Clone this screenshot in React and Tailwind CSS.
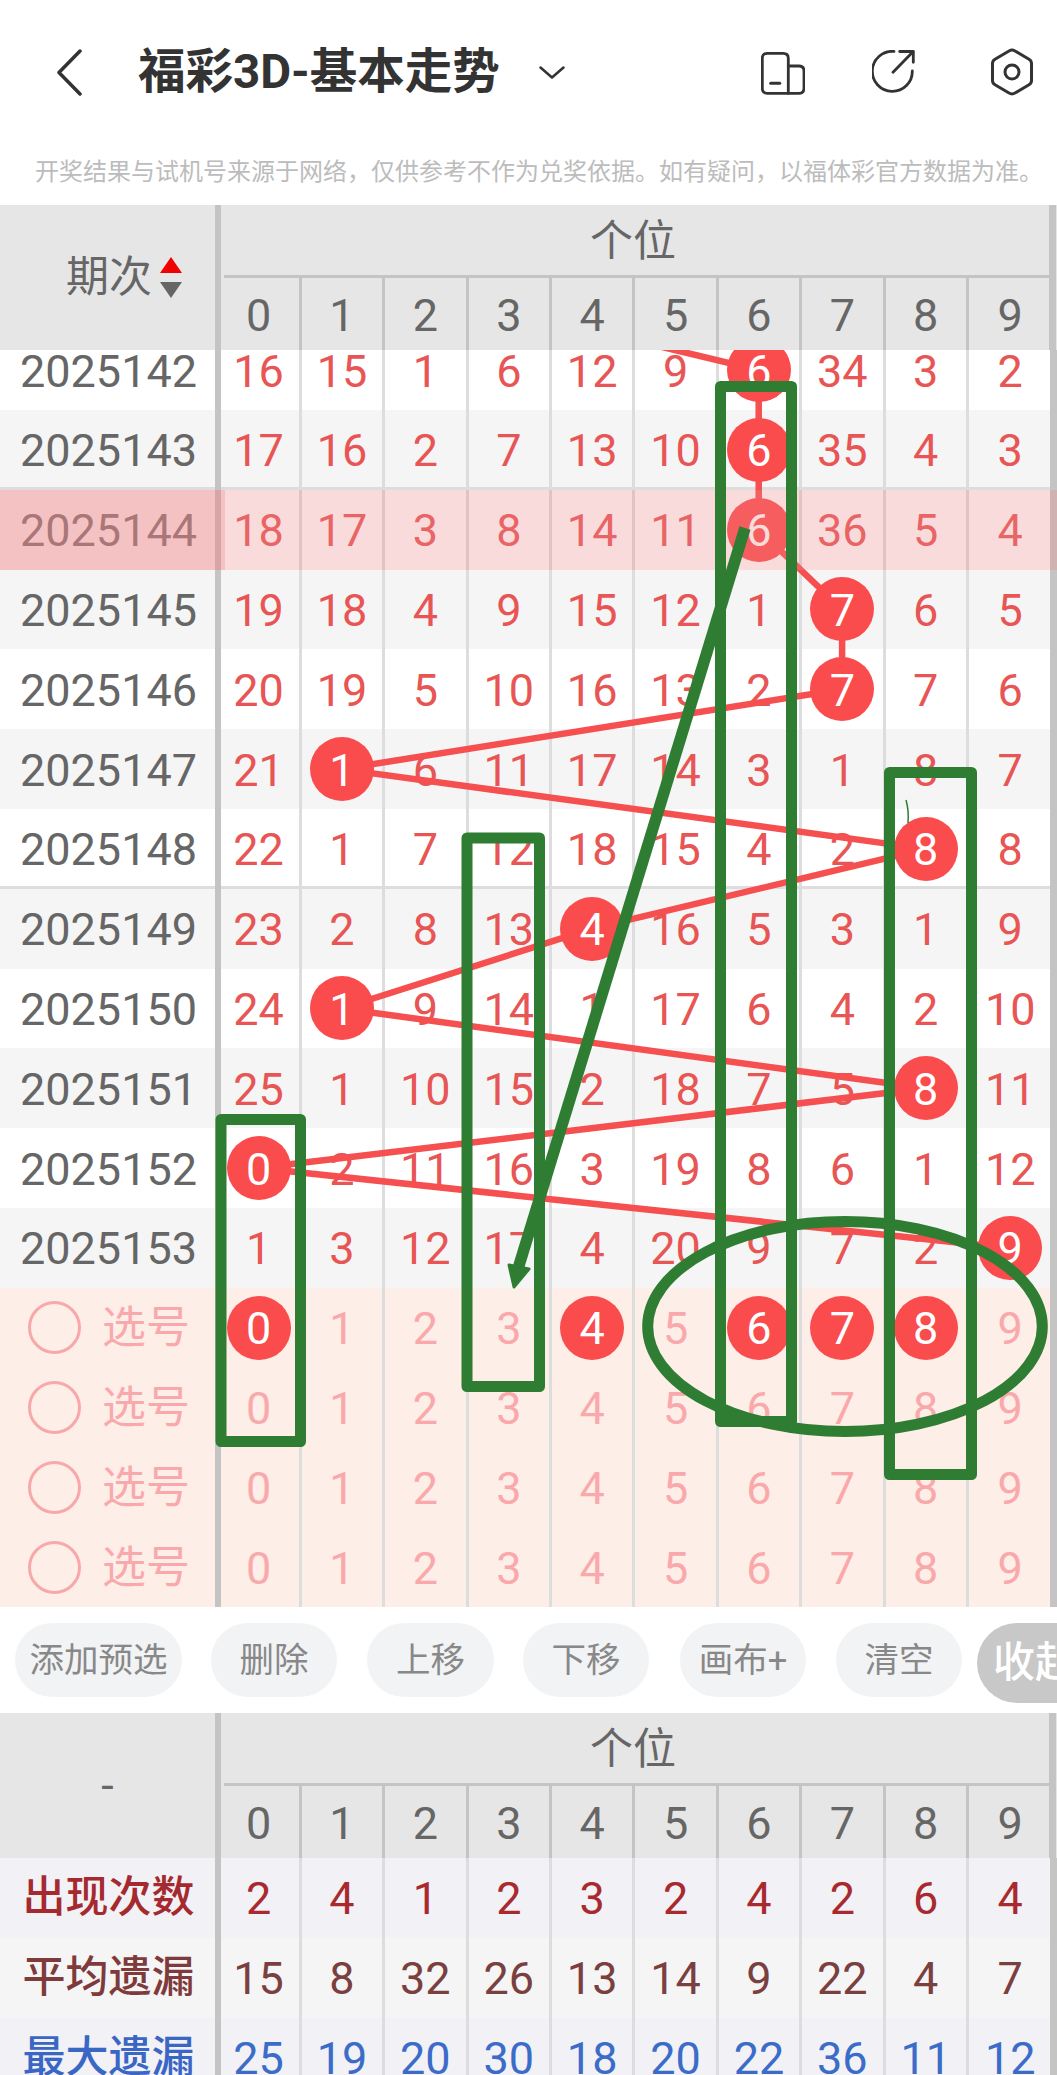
const digits = [0, 1, 2, 3, 4, 5, 6, 7, 8, 9];

// ===== Trend data (ball = column holding the drawn number) =====
const trendRows = [
  { id: "2025142", ball: 6, nums: [16, 15, 1, 6, 12, 9, 6, 34, 3, 2], bg: "bg-white" },
  { id: "2025143", ball: 6, nums: [17, 16, 2, 7, 13, 10, 6, 35, 4, 3], bg: "bg-[#f5f5f5]", line: true },
  { id: "2025144", ball: 6, nums: [18, 17, 3, 8, 14, 11, 6, 36, 5, 4], bg: "bg-white" },
  { id: "2025145", ball: 7, nums: [19, 18, 4, 9, 15, 12, 1, 7, 6, 5], bg: "bg-[#f5f5f5]" },
  { id: "2025146", ball: 7, nums: [20, 19, 5, 10, 16, 13, 2, 7, 7, 6], bg: "bg-white" },
  { id: "2025147", ball: 1, nums: [21, 1, 6, 11, 17, 14, 3, 1, 8, 7], bg: "bg-[#f5f5f5]" },
  { id: "2025148", ball: 8, nums: [22, 1, 7, 12, 18, 15, 4, 2, 8, 8], bg: "bg-white", line: true },
  { id: "2025149", ball: 4, nums: [23, 2, 8, 13, 4, 16, 5, 3, 1, 9], bg: "bg-[#f5f5f5]" },
  { id: "2025150", ball: 1, nums: [24, 1, 9, 14, 1, 17, 6, 4, 2, 10], bg: "bg-white" },
  { id: "2025151", ball: 8, nums: [25, 1, 10, 15, 2, 18, 7, 5, 8, 11], bg: "bg-[#f5f5f5]" },
  { id: "2025152", ball: 0, nums: [0, 2, 11, 16, 3, 19, 8, 6, 1, 12], bg: "bg-white" },
  { id: "2025153", ball: 9, nums: [1, 3, 12, 17, 4, 20, 9, 7, 2, 9], bg: "bg-[#f5f5f5]" },
];

const pickRows = [[0, 4, 6, 7, 8], [], [], []];
const buttons = [
  { label: "添加预选", w: "w-[167px]", ml: "ml-[15px]" },
  { label: "删除", w: "w-[126px]", ml: "ml-[29px]" },
  { label: "上移", w: "w-[127px]", ml: "ml-[30px]" },
  { label: "下移", w: "w-[126px]", ml: "ml-[29px]" },
  { label: "画布+", w: "w-[126px]", ml: "ml-[31px]" },
  { label: "清空", w: "w-[126px]", ml: "ml-[30px]" },
];

const colX = (c) => 258.3 + 83.4 * c;
const rowY = (r) => 370.1 + 79.8 * r;
const points = [[2, -1], ...trendRows.map((row, i) => [row.ball, i])]
  .map(([c, r]) => `${colX(c)},${rowY(r)}`)
  .join(" ");

function Cell({ index, children, line = "border-[#dddddd]", className = "" }) {
  const last = index === 9;
  return (
    <div
      className={`flex h-full shrink-0 items-center justify-center pt-[2px] ${
        last ? "w-[80.6px] pl-[2px]" : `w-[83.4px] border-r-[3px] ${line}`
      } ${className}`}
    >
      {children}
    </div>
  );
}

function Ball({ value }) {
  return (
    <div className="relative z-20 -mt-[2px] flex h-[64px] w-[64px] shrink-0 items-center justify-center rounded-full bg-[#fa4b4d] pt-[2px] text-white">
      {value}
    </div>
  );
}

function Row({ left, bg, line, children }) {
  return (
    <div className={`flex h-[79.8px] ${bg} ${line ? "shadow-[inset_0_-3px_0_#dddddd]" : ""}`}>
      <div className="relative z-[1] flex h-full w-[221px] shrink-0 items-center border-r-[6px] border-[#c4c4c4]">
        {left}
      </div>
      <div className="-ml-[2.6px] flex h-full">{children}</div>
      <div className="h-full w-[7px] shrink-0 bg-[#c4c4c4]" />
    </div>
  );
}

function TableHeader({ left }) {
  return (
    <div className="flex h-[145px] bg-[#e6e6e6] text-[#666666]">
      <div className="flex w-[221px] shrink-0 items-center border-r-[6px] border-[#c4c4c4]">{left}</div>
      <div className="flex w-[828px] shrink-0 flex-col">
        <div className="ml-[3px] flex h-[73px] items-center justify-center border-b-[3px] border-[#c4c4c4] pr-[7px] pt-[2px] text-[43px] leading-none">
          个位
        </div>
        <div className="-ml-[2.6px] flex h-[72px]">
          {digits.map((d) => (
            <Cell key={d} index={d} line="border-[#c4c4c4]">
              {d}
            </Cell>
          ))}
        </div>
      </div>
      <div className="h-full w-[7px] shrink-0 bg-[#c4c4c4]" />
    </div>
  );
}

function Annotations() {
  return (
    <svg
      className="pointer-events-none absolute left-0 top-0 z-40 h-[2075px] w-[1057px]"
      viewBox="0 0 1057 2075"
      fill="none"
      stroke="#2e7d32"
      strokeWidth="11"
      strokeLinejoin="round"
    >
      <rect x="720.5" y="386.5" width="71" height="1035" />
      <rect x="889.5" y="772.5" width="82" height="702" />
      <rect x="221" y="1119.5" width="79.5" height="322" />
      <rect x="467" y="838" width="72.5" height="548.5" />
      <ellipse cx="845" cy="1326.5" rx="197.3" ry="105" />
      <path d="M745 528 L517 1272" strokeWidth="11.5" />
      <path d="M509 1265 L514 1287 L529 1269 Z" fill="#2e7d32" strokeWidth="3" />
      <path d="M906 800 Q909 810 908 823" strokeWidth="1.5" />
    </svg>
  );
}

export default function App() {
  return (
    <div className="relative h-[2075px] w-[1057px] overflow-hidden bg-white font-[family-name:Roboto,'Noto_Sans_CJK_SC',sans-serif] text-[45px] leading-none">
      {/* ===== Nav bar ===== */}
      <div className="flex h-[144px] items-center text-[#333333]">
        <svg className="ml-[57px] shrink-0" width="25" height="47" viewBox="0 0 25 47" fill="none" stroke="#333333" strokeWidth="3.5" strokeLinecap="round" strokeLinejoin="round">
          <path d="M23 2 L2 23.5 L23 45" />
        </svg>
        <div className="ml-[56px] w-[361px] shrink-0 whitespace-nowrap pt-[2px] text-[47.5px] font-bold leading-none">福彩3D-基本走势</div>
        <svg className="ml-[40px] shrink-0" width="26" height="13" viewBox="0 0 26 13" fill="none" stroke="#333333" strokeWidth="2.5" strokeLinecap="round" strokeLinejoin="round">
          <path d="M1.5 1.5 L13 11.5 L24.5 1.5" />
        </svg>
        <svg className="ml-auto shrink-0" width="44" height="46" viewBox="0 0 44 46" fill="none" stroke="#333333" strokeWidth="2.8" strokeLinecap="round" strokeLinejoin="round">
          <path d="M6.3 4.3 H22.3 Q27.3 4.3 27.3 9.3 V44.3 H6.3 Q1.3 44.3 1.3 39.3 V9.3 Q1.3 4.3 6.3 4.3 Z" />
          <path d="M27.3 17 H38 Q43 17 43 22 V39.3 Q43 44.3 38 44.3 H27.3" />
          <path d="M9.7 34.3 H18.7" strokeWidth="3" />
        </svg>
        <svg className="ml-[67px] shrink-0" width="44" height="44" viewBox="0 0 44 44" fill="none" stroke="#333333" strokeWidth="2.8" strokeLinecap="round" strokeLinejoin="round">
          <path d="M22 1.4 A20 20 0 1 0 40.3 21" />
          <path d="M27.7 1.5 H41.3 V12.3" />
          <path d="M41 1.8 L21 22.3" />
        </svg>
        <svg className="ml-[75px] mr-[24px] shrink-0" width="42" height="48" viewBox="0 0 42 48" fill="none" stroke="#333333" strokeWidth="3">
          <path d="M18 3 Q21 1.2 24 3 L38 11.2 Q40.5 12.7 40.5 15.5 V32.5 Q40.5 35.3 38 36.8 L24 45 Q21 46.8 18 45 L4 36.8 Q1.5 35.3 1.5 32.5 V15.5 Q1.5 12.7 4 11.2 Z" />
          <circle cx="21" cy="24" r="7" />
        </svg>
      </div>

      {/* ===== Notice ===== */}
      <div className="h-[61px] whitespace-nowrap pl-[35px] pt-[16px] text-[24px] leading-none text-[#bcbcbc]">
        开奖结果与试机号来源于网络，仅供参考不作为兑奖依据。如有疑问，以福体彩官方数据为准。
      </div>

      {/* ===== Trend header ===== */}
      <div className="relative z-50">
        <TableHeader
          left={
            <div className="flex w-full items-center pl-[66px]">
              <span className="text-[43px]">期次</span>
              <div className="ml-[8px] flex flex-col gap-[9px]">
                <div className="h-0 w-0 border-x-[11px] border-b-[16px] border-x-transparent border-b-[#f00000]" />
                <div className="h-0 w-0 border-x-[11px] border-t-[16px] border-x-transparent border-t-[#666666]" />
              </div>
            </div>
          }
        />
      </div>

      {/* ===== Trend body ===== */}
      <div className="relative h-[1258px] overflow-hidden">
        <div className="-mt-[19.8px]">
          {trendRows.map((row) => (
            <Row
              key={row.id}
              bg={row.bg}
              line={row.line}
              left={<span className="w-full pl-[2px] pt-[2px] text-center text-[#666666]">{row.id}</span>}
            >
              {row.nums.map((n, i) => (
                <Cell key={i} index={i} className="text-[#e85555]">
                  {i === row.ball ? <Ball value={n} /> : n}
                </Cell>
              ))}
            </Row>
          ))}

          {pickRows.map((picked, r) => (
            <Row
              key={r}
              bg="bg-[#feeee8]"
              left={
                <div className="flex items-center pl-[28px] text-[#f9a9ab]">
                  <div className="h-[53px] w-[53px] rounded-full border-[3px] border-[#f7a8a8]" />
                  <span className="ml-[21px] pt-[1px] text-[44px]">选号</span>
                </div>
              }
            >
              {digits.map((d) => (
                <Cell key={d} index={d} className="text-[#f9a9ab]">
                  {picked.includes(d) ? <Ball value={d} /> : d}
                </Cell>
              ))}
            </Row>
          ))}
        </div>

        {/* trend line runs over the numbers, under the balls */}
        <svg className="pointer-events-none absolute left-0 top-0 z-10 h-full w-full" viewBox="0 350 1057 1258" fill="none">
          <polyline points={points} stroke="#f54f50" strokeWidth="6.5" strokeLinejoin="round" />
        </svg>

        {/* highlighted row */}
        <div className="absolute left-0 top-[139.8px] z-30 h-[79.8px] w-full bg-[rgba(235,135,140,0.3)]" />
        <div className="absolute left-0 top-[139.8px] z-30 h-[79.8px] w-[225px] bg-[rgba(235,135,140,0.3)]" />
      </div>

      {/* ===== Toolbar ===== */}
      <div className="flex h-[105px] items-start pt-[15px] text-[34.5px] text-[#888888]">
        {buttons.map((b) => (
          <div key={b.label} className={`flex h-[74px] shrink-0 items-center justify-center rounded-[37px] bg-[#f2f3f5] ${b.w} ${b.ml}`}>
            {b.label}
          </div>
        ))}
        <div className="ml-[15px] flex h-[80px] w-[100px] shrink-0 items-center whitespace-nowrap rounded-l-[40px] bg-[#c8c8c8] pl-[16px] text-[42px] font-medium text-white">
          收起
        </div>
      </div>

      {/* ===== Stats ===== */}
      <TableHeader left={<span className="w-full text-center">-</span>} />
      <div>
        <Row
          bg="bg-[#f2f1f6]"
          left={<span className="w-full pl-[2px] text-center text-[43px] font-medium text-[#a52a2f]">出现次数</span>}
        >
          {[2, 4, 1, 2, 3, 2, 4, 2, 6, 4].map((n, i) => (
            <Cell key={i} index={i} className="text-[#a82a2e]">{n}</Cell>
          ))}
        </Row>
        <Row
          bg="bg-[#f6f5f6]"
          left={<span className="w-full pl-[2px] text-center text-[43px] font-medium text-[#7f3b3b]">平均遗漏</span>}
        >
          {[15, 8, 32, 26, 13, 14, 9, 22, 4, 7].map((n, i) => (
            <Cell key={i} index={i} className="text-[#7a4040]">{n}</Cell>
          ))}
        </Row>
        <Row
          bg="bg-[#f2f1f6]"
          left={<span className="w-full pl-[2px] text-center text-[43px] font-medium text-[#3a66c4]">最大遗漏</span>}
        >
          {[25, 19, 20, 30, 18, 20, 22, 36, 11, 12].map((n, i) => (
            <Cell key={i} index={i} className="text-[#3b6cc8]">{n}</Cell>
          ))}
        </Row>
      </div>

      <Annotations />
    </div>
  );
}
